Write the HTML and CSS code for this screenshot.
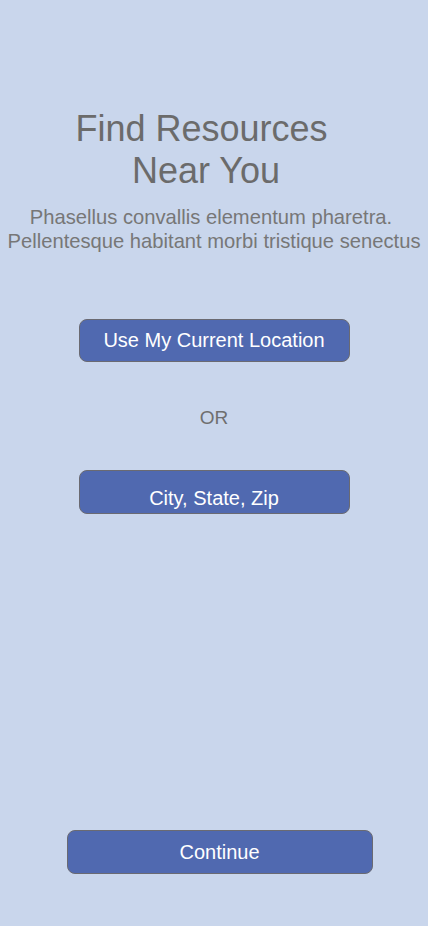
FILE: index.html
```html
<!DOCTYPE html>
<html>
<head>
<meta charset="utf-8">
<link rel="stylesheet" href="styles.css">
</head>
<body>
<main class="screen">
  <h1 class="title"><span class="title-line first">Find Resources</span><span class="title-line">Near You</span></h1>
  <p class="subtitle"><span class="sub-line first">Phasellus convallis elementum pharetra.</span><span class="sub-line">Pellentesque habitant morbi tristique senectus</span></p>
  <button class="btn btn-location">Use My Current Location</button>
  <div class="or">OR</div>
  <button class="btn btn-city"><span>City, State, Zip</span></button>
  <div class="spacer"></div>
  <button class="btn btn-continue">Continue</button>
</main>
</body>
</html>
```
FILE: styles.css
```css
html, body {
  margin: 0;
  padding: 0;
  background: #c9d6ec;
}
.screen {
  width: 428px;
  height: 926px;
  display: flex;
  flex-direction: column;
  align-items: center;
  font-family: "Liberation Sans", Arial, sans-serif;
  box-sizing: border-box;
  padding-top: 108px;
}
.title {
  margin: 0;
  font-weight: normal;
  font-size: 36px;
  line-height: 42px;
  color: #6b6b6b;
  text-align: center;
  width: 300px;
  margin-left: -16px;
}
.title-line {
  display: block;
}
.title-line.first {
  padding-right: 9px;
}
.subtitle {
  margin: 13px 0 0;
  font-size: 20.2px;
  line-height: 24px;
  color: #777777;
  text-align: center;
  white-space: nowrap;
}
.sub-line {
  display: block;
}
.sub-line.first {
  padding-right: 6px;
}
.btn {
  font-family: "Liberation Sans", Arial, sans-serif;
  background: #5069b0;
  color: #ffffff;
  border: 1px solid #6a6a72;
  border-radius: 8px;
  font-size: 20px;
  padding: 0;
  box-sizing: border-box;
}
.btn-location {
  margin-top: 66px;
  width: 271px;
  height: 43px;
}
.or {
  margin-top: 44px;
  font-size: 19px;
  color: #6f6f6f;
  line-height: 24px;
}
.btn-city {
  margin-top: 40px;
  width: 271px;
  height: 44px;
  display: flex;
  justify-content: center;
  align-items: flex-start;
  padding-top: 15px;
  line-height: 24px;
}
.spacer {
  flex: 1;
}
.btn-continue {
  width: 306px;
  height: 44px;
  margin-bottom: 52px;
  margin-left: 11px;
}
```
